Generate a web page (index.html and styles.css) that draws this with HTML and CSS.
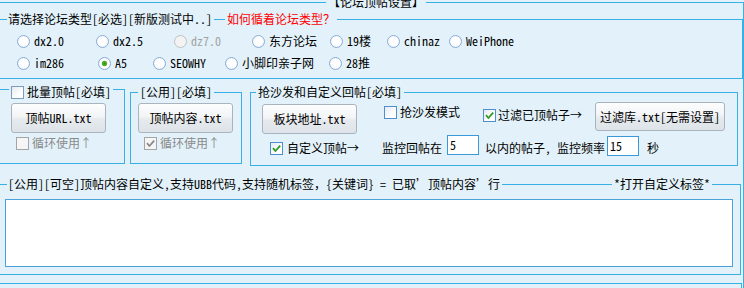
FILE: index.html
```html
<!DOCTYPE html>
<html lang="zh-CN">
<head>
<meta charset="utf-8">
<title>论坛顶帖设置</title>
<link rel="stylesheet" href="styles.css">
</head>
<body>
<div class="outer">
  <div class="legend lg-title">【论坛顶帖设置】</div>

  <div class="group g1">
    <div class="legend lg1"><span>请选择论坛类型[必选][新版测试中..]</span><span class="seg"></span><span class="red">如何循着论坛类型？</span></div>
    <div class="rrow rrow1">
      <label class="ritem w79"><span class="radio"></span>dx2.0</label>
      <label class="ritem w78"><span class="radio"></span>dx2.5</label>
      <label class="ritem w78 off"><span class="radio dis"></span>dz7.0</label>
      <label class="ritem w78"><span class="radio"></span>东方论坛</label>
      <label class="ritem w57"><span class="radio"></span>19楼</label>
      <label class="ritem w62"><span class="radio"></span>chinaz</label>
      <label class="ritem"><span class="radio"></span>WeiPhone</label>
    </div>
    <div class="rrow">
      <label class="ritem w81"><span class="radio"></span>im286</label>
      <label class="ritem w55"><span class="radio on"></span>A5</label>
      <label class="ritem w72"><span class="radio"></span>SEOWHY</label>
      <label class="ritem w104"><span class="radio"></span>小脚印亲子网</label>
      <label class="ritem"><span class="radio"></span>28推</label>
    </div>
  </div>

  <div class="row2">
    <div class="group g2a">
      <div class="legend lg2a"><span class="cb"></span><span>批量顶帖[必填]</span></div>
      <div class="btn b95 ml11">顶帖URL.txt</div>
      <div class="crow dim ml16"><span class="cb dis"></span><span>循环使用↑</span></div>
    </div>
    <div class="group g2b">
      <div class="legend lg2b">[公用][必填]</div>
      <div class="btn b95 ml7">顶帖内容.txt</div>
      <div class="crow dim ml13"><span class="cb dis"><svg viewBox="0 0 11 11" width="11" height="11"><path d="M2 5.2 L4.4 8 L9.2 2.6" fill="none" stroke="#8a8a8a" stroke-width="1.8"/></svg></span><span>循环使用↑</span></div>
    </div>
    <div class="group g2c">
      <div class="legend lg2c">抢沙发和自定义回帖[必填]</div>
      <div class="rowA">
        <div class="btn b95 bA1">板块地址.txt</div>
        <div class="crow cA1"><span class="cb blue"></span><span>抢沙发模式</span></div>
        <div class="crow cA2"><span class="cb blue"><svg viewBox="0 0 11 11" width="11" height="11"><path d="M2 5.2 L4.4 8 L9.2 2.6" fill="none" stroke="#2f9a22" stroke-width="1.8"/></svg></span><span>过滤已顶帖子→</span></div>
        <div class="btn bA2">过滤库.txt[无需设置]</div>
      </div>
      <div class="rowB">
        <div class="crow cB1"><span class="cb blue"><svg viewBox="0 0 11 11" width="11" height="11"><path d="M2 5.2 L4.4 8 L9.2 2.6" fill="none" stroke="#2f9a22" stroke-width="1.8"/></svg></span><span>自定义顶帖→</span></div>
        <span class="txt t1">监控回帖在</span>
        <div class="inp i1">5</div>
        <span class="txt t2">以内的帖子, 监控频率</span>
        <div class="inp i2">15</div>
        <span class="txt t3">秒</span>
      </div>
    </div>
  </div>

  <div class="group g4">
    <div class="legend lg4"><span>[公用][可空]顶帖内容自定义,支持UBB代码,支持随机标签，{关键词} = 已取’顶帖内容’行</span><span class="fill"></span><span>*打开自定义标签*</span></div>
    <div class="ta"></div>
  </div>

  <div class="group g5"></div>
</div>
</body>
</html>
```

FILE: styles.css
```css
html, body {
  margin: 0;
  padding: 0;
  overflow: hidden;
  background: #e3f2fa;
}
body {
  font: 12px/14px "Noto Sans Mono CJK SC", "Noto Sans CJK SC", sans-serif;
  color: #000;
  height: 288px;
}
.outer {
  margin: 2px 0 0 -2px;
  width: 746px;
  height: 330px;
  box-sizing: border-box;
  border: 1px solid #38b0e6;
}
.legend {
  display: flex;
  align-items: center;
  width: fit-content;
  height: 14px;
  margin-top: -8px;
  padding: 0 2px;
  background: #e3f2fa;
  white-space: nowrap;
}
.lg-title { margin-left: 327px; }
.group {
  border: 1px solid #38b0e6;
  box-sizing: border-box;
}
.g1 { margin-top: 10px; height: 60px; }
.lg1 { margin-left: 7px; padding-left: 1px; }
.seg {
  width: 11px;
  height: 1px;
  margin: 0 2px 0 2px;
  background: #38b0e6;
}
.red { color: #f00; }

.rrow {
  display: flex;
  align-items: center;
  height: 22px;
  padding-left: 17px;
}
.rrow1 { margin-top: 4px; }
.ritem {
  display: flex;
  align-items: center;
  gap: 4px;
  flex: none;
}
.ritem.off { color: #a2a2a2; }
.w55 { width: 55px; }
.w57 { width: 57px; }
.w62 { width: 62px; }
.w72 { width: 72px; }
.w78 { width: 78px; }
.w79 { width: 79px; }
.w81 { width: 81px; }
.w104 { width: 104px; }

.radio {
  width: 13px;
  height: 13px;
  box-sizing: border-box;
  border-radius: 50%;
  border: 1px solid #8badd6;
  background: radial-gradient(circle at 50% 45%, #fff 45%, #e2e9f2 100%);
  flex: none;
}
.radio.on {
  background: radial-gradient(circle at 50% 50%, #2f8d1c 0, #56b52f 2.3px, #fff 3.2px, #fff 4.5px, #e2e9f2 6.5px);
}
.radio.dis {
  border-color: #c0c0c0;
  background: #f3f3f3;
}

.cb {
  width: 13px;
  height: 13px;
  box-sizing: border-box;
  border: 1px solid #7d9cc4;
  background: linear-gradient(135deg, #e6ebf1, #fff 70%);
  flex: none;
  display: flex;
  align-items: center;
  justify-content: center;
}
.cb.blue { border-color: #4f8fd0; }
.cb.dis {
  border-color: #a5a5a5;
  background: #f5f5f5;
}

.btn {
  display: flex;
  align-items: center;
  justify-content: center;
  box-sizing: border-box;
  border: 1px solid #a9b4bf;
  border-radius: 3px;
  background: linear-gradient(#fdfdfd, #f2f4f6 45%, #e6eaee 55%, #dde3e8);
  white-space: nowrap;
  flex: none;
}
.b95 { width: 95px; height: 30px; margin-top: 4px; }
.ml7 { margin-left: 7px; }
.ml11 { margin-left: 11px; }
.ml13 { margin-left: 13px; }
.ml16 { margin-left: 16px; }

.crow {
  display: flex;
  align-items: center;
  gap: 3px;
  height: 14px;
  white-space: nowrap;
  flex: none;
}
.b95 + .crow { margin-top: 3px; }
.dim { color: #8a8a8a; }

.row2 {
  display: flex;
  align-items: flex-start;
  margin-top: 10px;
}
.g2a { width: 126px; height: 75px; }
.lg2a { margin-left: 9px; margin-top: -5px; gap: 3px; }
.g2b { width: 112px; height: 72px; margin: 3px 0 0 5px; }
.lg2b { margin-left: 7px; }
.g2c { width: 488px; height: 74px; margin: 3px 0 0 8px; }
.lg2c { margin-left: 5px; }

.rowA {
  display: flex;
  align-items: flex-start;
  margin-top: 3px;
}
.rowA .bA1 { margin: 2px 0 0 11px; }
.cA1 { width: 99px; margin: 6px 0 0 27px; }
.cA2 { width: 112px; margin-top: 6px; gap: 2px; }
.bA2 { width: 130px; height: 29px; }

.rowB {
  display: flex;
  align-items: flex-start;
}
.cB1 { width: 112px; margin: 7px 0 0 19px; gap: 4px; }
.txt { margin-top: 7px; white-space: nowrap; flex: none; }
.t1 { width: 65px; }
.inp {
  width: 32px;
  height: 20px;
  box-sizing: border-box;
  border: 1px solid #3a9ad9;
  background: #fff;
  padding-left: 2px;
  line-height: 18px;
  flex: none;
}
.i1 { margin-top: 1px; }
.t2 { width: 122px; margin-left: 6px; }
.i2 { margin-top: 2px; }
.t3 { margin-left: 8px; }

.g4 { width: 742px; height: 91px; margin-top: 18px; }
.lg4 { width: 705px; margin-left: 7px; padding-left: 1px; box-sizing: border-box; }
.fill {
  flex: 1;
  height: 1px;
  margin: 0 2px;
  background: #38b0e6;
}
.ta {
  width: 728px;
  height: 68px;
  margin: 8px 0 0 5px;
  box-sizing: border-box;
  border: 1px solid #4ba2db;
  background: #fff;
}
.g5 { width: 743px; height: 40px; margin-top: 8px; }
```
